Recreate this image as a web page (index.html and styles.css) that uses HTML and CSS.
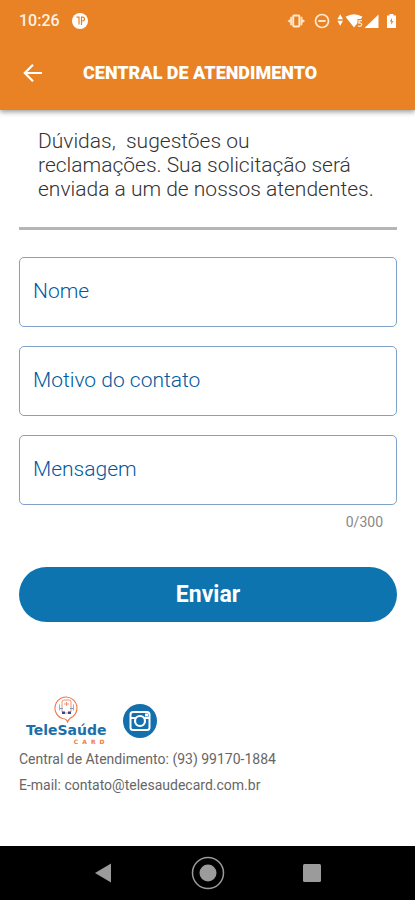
FILE: index.html
```html
<!DOCTYPE html>
<html lang="pt-BR">
<head>
<meta charset="utf-8">
<meta name="viewport" content="width=device-width, initial-scale=1">
<title>Central de Atendimento</title>
<link rel="stylesheet" href="styles.css">
</head>
<body>
<header class="header">
  <div class="status">
    <span class="clock">10:26</span>
    <svg class="notice" width="16" height="16" viewBox="0 0 16 16" aria-hidden="true">
      <circle cx="8" cy="8" r="8" fill="#fff"/>
      <path d="M4.500 4.200H7v7.300M9.500 12V4.200h1.100a1.900 1.900 0 0 1 0 3.800H9.500" fill="none" stroke="#e88224" stroke-width="1.200"/>
    </svg>
    <svg class="indicators" width="110" height="16" viewBox="0 0 110 16" aria-hidden="true">
      <rect x="5.200" y="2.500" width="6.200" height="11" rx="1" fill="none" stroke="#ffe9d2" stroke-width="2"/>
      <path d="M4 3.800v8.400H2.200V10L-.5 8l2.700-2V3.800ZM12.600 3.800v8.400h1.800V10l2.700-2-2.700-2V3.800Z" fill="#ffe0c0"/>
      <circle cx="34" cy="8" r="6.500" fill="none" stroke="#ffe9d2" stroke-width="1.700"/>
      <path d="M30.400 8h7.200" stroke="#ffe9d2" stroke-width="2"/>
      <path d="m52.200 1.200 2.800 5h-5.600ZM49.400 7.800H55l-2.800 5Z" fill="#fff"/>
      <path d="M57.500 3.800Q66 -1.400 74.500 3.800L66 14.400Z" fill="#fff"/>
      <path d="M74 7.600h-3v2.500c3.400-.9 3.600 3.200.4 3.200q-.9 0-1.500-.7" fill="none" stroke="#e88224" stroke-width="3"/>
      <path d="M74 7.600h-3v2.500c3.400-.9 3.600 3.200.4 3.200q-.9 0-1.500-.7" fill="none" stroke="#ffe9d2" stroke-width="1.300"/>
      <path d="M90.500 1.500V15h-14Z" fill="#fff"/>
      <path d="M101.500 1h4v1.500h2.500V15h-9V2.500h2.500Z" fill="#fff"/>
      <path d="m104 5-2.200 3.600h1.400v3.200l2.200-3.800H104Z" fill="#e88224"/>
    </svg>
  </div>
  <div class="appbar">
    <button class="back" type="button" aria-label="Voltar">
      <svg width="20" height="20" viewBox="0 0 20 20" aria-hidden="true">
        <path d="M19 10H2M10 1.800 1.800 10l8.200 8.200" fill="none" stroke="#fff" stroke-width="2.200"/>
      </svg>
    </button>
    <h1 class="title">CENTRAL DE ATENDIMENTO</h1>
  </div>
</header>

<main class="content">
  <p class="intro">Dúvidas,&nbsp; sugestões ou<br>reclamações. Sua solicitação será<br>enviada a um de nossos atendentes.</p>
  <hr class="rule">
  <form class="form">
    <div class="field">
      <label for="nome">Nome</label>
      <input id="nome" type="text">
    </div>
    <div class="field">
      <label for="motivo">Motivo do contato</label>
      <input id="motivo" type="text">
    </div>
    <div class="field">
      <label for="mensagem">Mensagem</label>
      <textarea id="mensagem" maxlength="300"></textarea>
    </div>
    <div class="counter">0/300</div>
    <button class="send" type="button">Enviar</button>
  </form>

  <footer class="footer">
    <div class="brands">
      <div class="logo">
        <svg width="28" height="27" viewBox="0 0 28 27" aria-hidden="true">
          <path d="M10.500 22.500A11 11 0 1 1 21 20.500Q17 22 15.500 26Q15 23 10.500 22.500" fill="none" stroke="#f07845" stroke-width="1.100"/>
          <rect x="10" y="4" width="9" height="13" rx="2" fill="#fff" stroke="#ef9472" stroke-width="1"/>
          <path d="M12 8h5M14.500 6v4M7.500 8.500v6M21.500 8.500v6" fill="none" stroke="#ef9472" stroke-width="1"/>
          <path d="M8 12.500h3M18 12.500h3" stroke="#8394bd" stroke-width="1"/>
          <path d="M10 15.500h3v2.500h-3ZM16 15.500h3v2.500h-3Z" fill="#304b8c"/>
        </svg>
        <span class="logo-name">TeleSaúde</span>
        <span class="logo-card">CARD</span>
      </div>
      <a class="instagram" href="#" aria-label="Instagram">
        <svg width="34" height="34" viewBox="0 0 34 34" aria-hidden="true">
          <circle cx="17" cy="17" r="17" fill="#1470ad"/>
          <rect x="7.500" y="8" width="19" height="18" rx="2.500" fill="none" stroke="#fff" stroke-width="2"/>
          <path d="M8 14h18.500" stroke="#fff" stroke-width="2"/>
          <circle cx="17" cy="17" r="5" fill="#1470ad" stroke="#fff" stroke-width="2.200"/>
          <rect x="22" y="9.500" width="3" height="3" fill="#fff"/>
        </svg>
      </a>
    </div>
    <p class="contact">Central de Atendimento: (93) 99170-1884</p>
    <p class="contact">E-mail: contato@telesaudecard.com.br</p>
  </footer>
</main>

<nav class="navbar" aria-label="Sistema">
  <button type="button" aria-label="Voltar"><svg width="34" height="34" viewBox="0 0 34 34"><path d="M24 7.500v19L8 17Z" fill="#9b9b9b"/></svg></button>
  <button type="button" aria-label="Início"><svg width="34" height="34" viewBox="0 0 34 34"><circle cx="17" cy="17" r="15.500" fill="none" stroke="#9b9b9b" stroke-width="1.500"/><circle cx="17" cy="17" r="8.500" fill="#9b9b9b"/></svg></button>
  <button type="button" aria-label="Recentes"><svg width="34" height="34" viewBox="0 0 34 34"><rect x="8" y="8" width="18" height="18" rx="1.500" fill="#9b9b9b"/></svg></button>
</nav>
</body>
</html>
```
FILE: styles.css
```css
* { box-sizing: border-box; }

body {
  margin: 0;
  min-height: 100vh;
  display: flex;
  flex-direction: column;
  background: #fff;
  font-family: Roboto, "Liberation Sans", sans-serif;
  color: #666;
}

button {
  padding: 0;
  border: 0;
  background: none;
  font-family: inherit;
}

svg { display: block; }
p { margin: 0; }

.header {
  background: #e88224;
  color: #fff;
  box-shadow: 0 2px 5px rgba(0, 0, 0, 0.4);
}

.status {
  display: flex;
  align-items: center;
  height: 42px;
  padding: 0 17px 0 19px;
}

.clock {
  font-size: 16px;
  font-weight: 500;
  line-height: 20px;
  color: #fff1e3;
}

.notice { margin-left: 12px; }

.indicators {
  margin-left: auto;
  overflow: visible;
}

.appbar {
  display: flex;
  align-items: center;
  height: 68px;
  padding: 0 23px 6px;
  gap: 40px;
}

.title {
  margin: 0;
  font-size: 18px;
  font-weight: 900;
  line-height: 24px;
}

.content {
  flex: 1;
  padding: 19px 18px 0 19px;
}

.intro {
  padding: 0 10px 0 19px;
  font-size: 21px;
  font-weight: 300;
  line-height: 24px;
  color: #333;
}

.rule {
  height: 3px;
  margin: 26px 0 27px;
  border: 0;
  background: #b5b5b5;
}

.form {
  display: flex;
  flex-direction: column;
}

.field {
  display: grid;
  height: 70px;
  margin-bottom: 19px;
  border: 1px solid #7fa3c8;
  border-radius: 5px;
}

.field label,
.field input,
.field textarea {
  grid-area: 1 / 1;
  min-width: 0;
  padding: 0 13px;
  font-family: inherit;
  font-size: 21px;
  line-height: 24px;
}

.field label {
  align-self: center;
  padding-bottom: 2px;
  font-weight: 300;
  color: #005a9e;
  pointer-events: none;
}

.field input,
.field textarea {
  width: 100%;
  border: 0;
  background: none;
  outline: 0;
  resize: none;
}

.field textarea { padding-top: 22px; }

.counter {
  margin: -12px 14px 0 0;
  font-size: 14px;
  line-height: 20px;
  text-align: right;
  color: #888;
}

.send {
  height: 55px;
  margin-top: 35px;
  border-radius: 28px;
  background: #0e74af;
  color: #fff;
  font-size: 23px;
  font-weight: 700;
}

.footer { margin-top: 74px; }

.brands {
  display: flex;
  align-items: center;
  gap: 16px;
  padding-left: 7px;
}

.logo {
  display: flex;
  flex-direction: column;
  align-items: center;
  color: #1d6faa;
}

.logo-name {
  font-family: "DejaVu Sans", sans-serif;
  font-size: 14px;
  font-weight: 700;
  line-height: 15px;
}

.logo-card {
  align-self: flex-end;
  font-family: "DejaVu Sans", sans-serif;
  font-size: 6px;
  font-weight: 700;
  line-height: 8px;
  letter-spacing: 4px;
  margin-right: -2px;
  color: #f07845;
}

.contact {
  font-size: 14px;
  line-height: 26px;
}

.navbar {
  display: flex;
  align-items: center;
  justify-content: center;
  gap: 70px;
  height: 54px;
  background: #000;
}
```
